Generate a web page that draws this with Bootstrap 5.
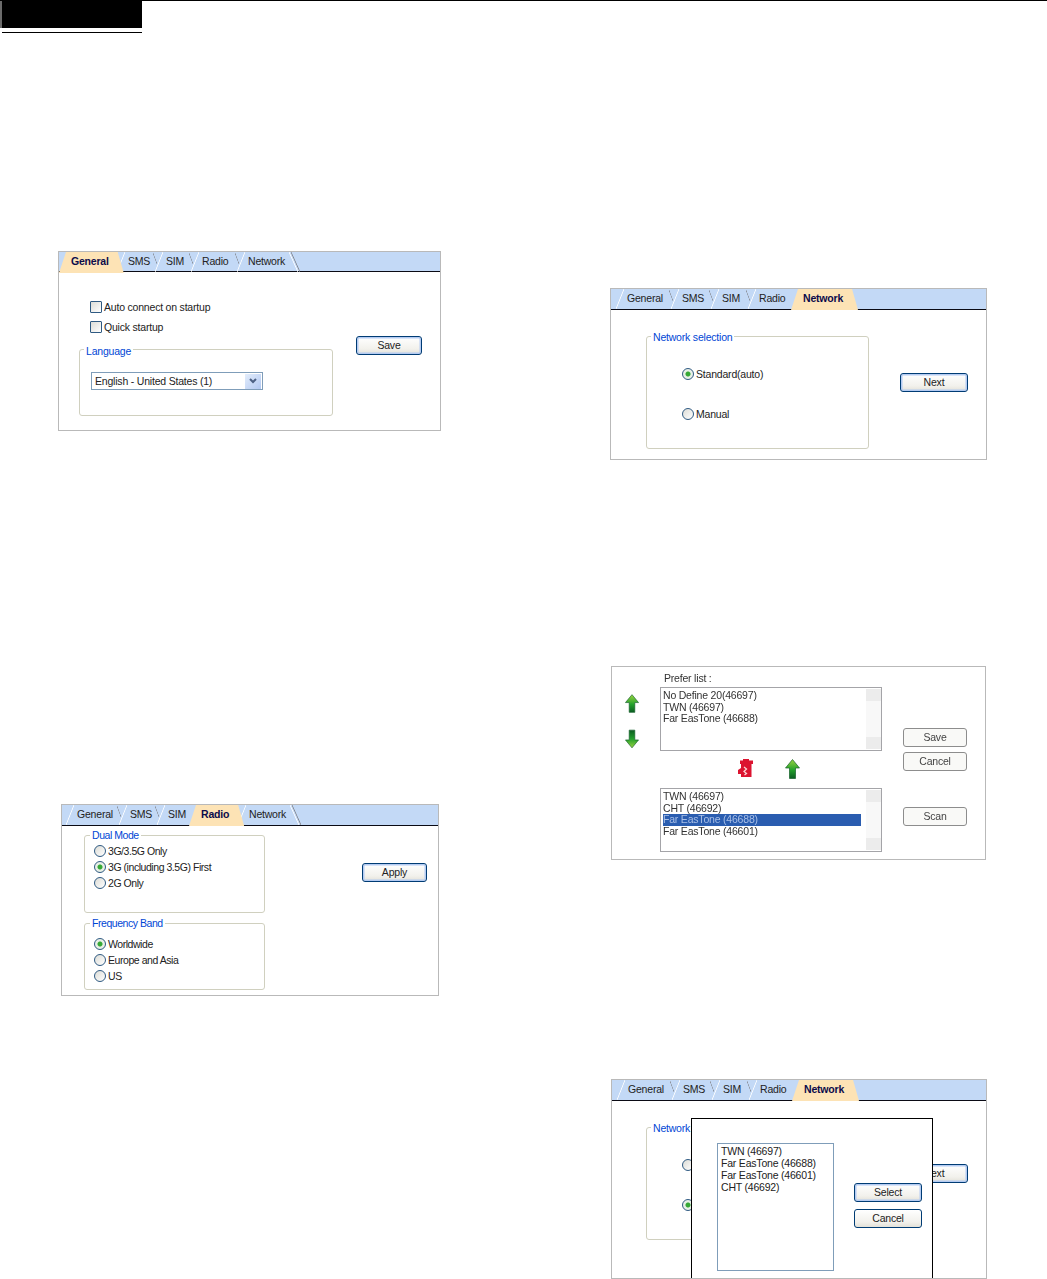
<!DOCTYPE html>
<html lang="en">
<head>
<meta charset="UTF-8">
<title>Settings manual page</title>
<link href="https://cdn.jsdelivr.net/npm/bootstrap@5.3.3/dist/css/bootstrap.min.css" rel="stylesheet">
<style>
html, body { height: 1279px; overflow: hidden; background: #fff; }
body { font-family: "Liberation Sans", Arial, sans-serif; font-size: 10.5px; line-height: 12px; color: #222; letter-spacing: -.2px; }

/* page header */
.doc-head { height: 33px; border-top: 1px solid #000; }
.head-mark { width: 142px; height: 27px; background: #000; border-left: 2px solid #6b6b6b; }
.head-rule { width: 140px; height: 1px; margin: 4px 0 0 2px; background: #000; }
.left-col { width: 610px; flex: none; }

/* screenshot panels */
.shot { position: relative; border: 1px solid #b9b9b9; background: #fff; overflow: hidden; }
#pn-general { width: 383px; height: 180px; margin: 218px 0 0 58px; }
#pn-radio { width: 378px; height: 192px; margin: 373px 0 0 61px; }
#pn-network { width: 377px; height: 172px; margin: 255px 0 0 0; }
#pn-prefer { width: 375px; height: 194px; margin: 206px 0 0 1px; }
#pn-select { width: 376px; height: 200px; margin: 219px 0 0 1px; }

/* tab strip */
.tab-strip { display: grid; height: 21px; background: #c3d9f6; border-bottom: 1px solid #0a0a14; line-height: 19px; }
#pn-general .tab-strip { height: 20px; padding-left: 12px; grid-template-columns: 57px 38px 36px 46px 60px 1fr; }
#pn-radio .tab-strip { padding-left: 15px; grid-template-columns: 53px 38px 33px 48px 60px 1fr; }
#pn-network .tab-strip, #pn-select .tab-strip { padding-left: 16px; grid-template-columns: 55px 40px 37px 44px 60px 1fr; }
.tab-cell { position: relative; font-size: 10.5px; white-space: nowrap; }
.tab-cell::before { content: ""; position: absolute; left: -11px; top: 0; width: 8px; height: 20px; background: linear-gradient(to bottom right, transparent calc(50% - .8px), #fff 50%, transparent calc(50% + .8px)); }
.tab-cell::after { content: ""; position: absolute; left: -13px; top: 1px; width: 4px; height: 11px; background: linear-gradient(to top right, transparent calc(50% - .6px), #8b8f98 50%, transparent calc(50% + .6px)); }
.tab-cell:first-child::after { display: none; }
.tab-tail { position: relative; }
.tab-tail::before { content: ""; position: absolute; left: -17px; top: 0; width: 9px; height: 20px; background: linear-gradient(to top right, transparent calc(50% - .8px), #85888f 50%, transparent calc(50% + .8px)); }
.tab-tail::after { content: ""; position: absolute; left: -19px; top: 0; width: 9px; height: 20px; background: linear-gradient(to top right, transparent calc(50% - .8px), #fff 50%, transparent calc(50% + .8px)); }
.tab-cell.is-on { z-index: 2; font-weight: 700; color: #0b0b4a; }
.tab-cell.is-on::before, .tab-cell.is-on::after { display: none; }
.tab-lbl { position: relative; display: inline-block; z-index: 0; }
.is-on .tab-lbl::before { content: ""; position: absolute; z-index: -1; left: -12px; right: -15px; top: 0; height: 21px; background: #fde3b5; clip-path: polygon(0 100%, 7px 0, calc(100% - 6px) 0, 100% 100%); }

/* form bits */
.grp-box { border: 1px solid #d0d0bf; border-radius: 3px; padding: 0; }
.grp-box legend { float: none; width: auto; margin: 0 0 0 4px; padding: 0 2px; font-size: 10.5px; line-height: 12px; color: #0046d5; }
.xp-row { display: flex; align-items: center; gap: 2px; height: 12px; line-height: 11px; white-space: nowrap; }
.xp-row .form-check-input { flex: none; width: 12px; height: 12px; margin: 0; border: 1px solid #2f5a82; background: linear-gradient(135deg, #dcdcd6, #fff); box-shadow: none; }
.xp-row .form-check-input[type=checkbox] { border-radius: 1px; }
.xp-row .form-check-input[type=radio]:checked { background: radial-gradient(circle, #35a835 0 2px, #e6f0e6 3px, #eeeee8 100%); border-color: #2f5a82; }
.xp-btn { display: block; padding: 0; height: 19px; font-size: 10.5px; line-height: 17px; letter-spacing: -.2px; color: #222; border: 1px solid #003c74; border-radius: 3px; background: linear-gradient(#fff, #f2f1ec 70%, #e3e1d8); }
.xp-default { box-shadow: inset 0 0 0 1.5px #b4cbf2; }
.xp-dim { border-color: #8d8d8d; background: #f9f9f7; color: #444; }
.xp-select { height: 18px; width: 172px; margin: 15px 0 0 11px; padding: 0 1px 0 3px; border: 1px solid #7f9db9; line-height: 16px; }
.drop-btn { width: 16px; height: 15px; margin-top: .5px; background: linear-gradient(135deg, #e3edfb, #b2c8f2); }
.xp-list { position: relative; height: 64px; border: 1px solid #a4a4a8; padding: 2px; line-height: 11.5px; }
.scroll-rail { position: absolute; top: 1px; right: 0; bottom: 1px; width: 15px; background: linear-gradient(#ececec 0 12px, #f8f8f8 12px calc(100% - 12px), #ececec calc(100% - 12px)); }
.pick-on { margin: 0 18px 0 0; background: #2a5db0; color: #a9bfe6; }

/* per panel spacing */
.general-body { padding: 29px 0 0 20px; }
.general-left { width: 254px; flex: none; }
.check-list { padding-left: 11px; }
.general-box { height: 75px; margin-top: 8px; }
.general-box legend { padding-top: 4px; }
.save-btn { width: 66px; margin: 35px 0 0 23px; }
.net-body { padding: 19px 0 0 35px; }
#pn-select .net-body { padding-left: 34px; }
.net-box { width: 223px; height: 120px; flex: none; }
.net-box legend { padding-top: 2px; }
.net-radios { padding: 25px 0 0 35px; }
.net-gap { height: 28px; }
.net-btn { width: 68px; margin: 44px 0 0 31px; }
#pn-radio .radio-body { letter-spacing: -.45px; }
.radio-body { padding: 3px 0 0 22px; }
.radio-left { width: 181px; flex: none; }
.mode-box { height: 84px; }
.band-box { height: 73px; margin-top: 4px; }
.radio-stack { padding: 4px 0 0 9px; }
.band-box .radio-stack { padding-top: 9px; }
#pn-radio .grp-box legend { margin-left: 5px; }
.apply-btn { width: 65px; margin: 34px 0 0 97px; }

.prefer-body { filter: blur(.6px); color: #333; }
.arrow-col { width: 48px; flex: none; padding: 27px 0 0 13px; }
.list-col { width: 222px; flex: none; padding-top: 5px; }
.prefer-title { height: 15px; padding-left: 4px; }
.mid-icons { height: 37px; padding: 8px 0 0 77px; gap: 31px; }
.btn-col { width: 64px; margin-left: 21px; padding-top: 61px; }
.btn-col .xp-btn { width: 64px; }
.cancel-btn { margin-top: 5px; }
.scan-btn { margin-top: 36px; }

.popup-sheet { position: absolute; left: 79px; top: 38px; bottom: 0; width: 242px; z-index: 5; padding: 24px 0 0 25px; background: #fff; border: 1px solid #000; border-bottom: 0; }
.popup-list { width: 117px; height: 128px; flex: none; padding: 1px 3px; border: 1px solid #7f9db9; line-height: 12px; }
.popup-btns { width: 68px; margin: 40px 0 0 20px; gap: 7px; }
</style>
</head>
<body>
<svg width="0" height="0" class="position-absolute">
  <defs>
    <linearGradient id="upGreen" x1="0" y1="0" x2="0" y2="1"><stop offset="0" stop-color="#9ad43f"/><stop offset=".55" stop-color="#23a12c"/><stop offset="1" stop-color="#0b5c22"/></linearGradient>
    <linearGradient id="downGreen" x1="0" y1="0" x2="0" y2="1"><stop offset="0" stop-color="#0b5c22"/><stop offset=".5" stop-color="#23a12c"/><stop offset="1" stop-color="#9ad43f"/></linearGradient>
    <symbol id="ic-up" viewBox="0 0 15 20"><path d="M7.5 .5 14.5 9H10.500V19.500H4.500V9H.5Z" fill="url(#upGreen)" stroke="#14602a" stroke-width=".7"/></symbol>
    <symbol id="ic-down" viewBox="0 0 15 20"><path d="M4.500 .5H10.500V11H14.500L7.500 19.500 .5 11H4.500Z" fill="url(#downGreen)" stroke="#14602a" stroke-width=".7"/></symbol>
    <symbol id="ic-bin" viewBox="0 0 17 18"><path d="M6 0H12V1.500H16V5H14.500V18H4V15H1V11L4 9V5H3V1.500H6Z" fill="#dc1430"/><path d="M7 8 9.500 10 7 12.500 9.500 14.500 7.500 16" fill="none" stroke="#fbd4d4" stroke-width="1.300"/></symbol>
  </defs>
</svg>

<header class="doc-head">
  <div class="head-mark"></div>
  <div class="head-rule"></div>
</header>

<main class="d-flex">
  <div class="left-col">
    <section class="shot" id="pn-general">
      <nav class="tab-strip">
        <span class="tab-cell is-on"><span class="tab-lbl">General</span></span>
        <span class="tab-cell">SMS</span><span class="tab-cell">SIM</span><span class="tab-cell">Radio</span><span class="tab-cell">Network</span><span class="tab-tail"></span>
      </nav>
      <div class="general-body d-flex">
        <div class="general-left">
          <div class="check-list d-flex flex-column gap-2">
            <label class="xp-row"><input class="form-check-input" type="checkbox">Auto connect on startup</label>
            <label class="xp-row"><input class="form-check-input" type="checkbox">Quick startup</label>
          </div>
          <fieldset class="grp-box general-box">
            <legend>Language</legend>
            <div class="xp-select d-flex justify-content-between">
              <span>English - United States (1)</span>
              <span class="drop-btn d-flex align-items-center justify-content-center"><svg width="8" height="6" viewBox="0 0 8 6"><path d="M1 1 4 4 7 1" fill="none" stroke="#4d6185" stroke-width="2"/></svg></span>
            </div>
          </fieldset>
        </div>
        <button type="button" class="btn xp-btn xp-default save-btn">Save</button>
      </div>
    </section>

    <section class="shot" id="pn-radio">
      <nav class="tab-strip">
        <span class="tab-cell">General</span><span class="tab-cell">SMS</span><span class="tab-cell">SIM</span>
        <span class="tab-cell is-on"><span class="tab-lbl">Radio</span></span>
        <span class="tab-cell">Network</span><span class="tab-tail"></span>
      </nav>
      <div class="radio-body d-flex">
        <div class="radio-left">
          <fieldset class="grp-box mode-box">
            <legend>Dual Mode</legend>
            <div class="radio-stack d-flex flex-column">
              <label class="xp-row mb-1"><input class="form-check-input" type="radio" name="mode">3G/3.5G Only</label>
              <label class="xp-row mb-1"><input class="form-check-input" type="radio" name="mode" checked>3G (including 3.5G) First</label>
              <label class="xp-row"><input class="form-check-input" type="radio" name="mode">2G Only</label>
            </div>
          </fieldset>
          <fieldset class="grp-box band-box">
            <legend>Frequency Band</legend>
            <div class="radio-stack d-flex flex-column">
              <label class="xp-row mb-1"><input class="form-check-input" type="radio" name="band" checked>Worldwide</label>
              <label class="xp-row mb-1"><input class="form-check-input" type="radio" name="band">Europe and Asia</label>
              <label class="xp-row"><input class="form-check-input" type="radio" name="band">US</label>
            </div>
          </fieldset>
        </div>
        <button type="button" class="btn xp-btn xp-default apply-btn">Apply</button>
      </div>
    </section>
  </div>

  <div>
    <section class="shot" id="pn-network">
      <nav class="tab-strip">
        <span class="tab-cell">General</span><span class="tab-cell">SMS</span><span class="tab-cell">SIM</span><span class="tab-cell">Radio</span>
        <span class="tab-cell is-on"><span class="tab-lbl">Network</span></span><span></span>
      </nav>
      <div class="net-body d-flex">
        <fieldset class="grp-box net-box">
          <legend>Network selection</legend>
          <div class="net-radios">
            <label class="xp-row"><input class="form-check-input" type="radio" name="net" checked>Standard(auto)</label>
            <div class="net-gap"></div>
            <label class="xp-row"><input class="form-check-input" type="radio" name="net">Manual</label>
          </div>
        </fieldset>
        <button type="button" class="btn xp-btn xp-default net-btn">Next</button>
      </div>
    </section>

    <section class="shot" id="pn-prefer">
      <div class="prefer-body d-flex">
        <div class="arrow-col d-flex flex-column gap-3">
          <svg width="14" height="19"><use href="#ic-up"/></svg>
          <svg width="14" height="20"><use href="#ic-down"/></svg>
        </div>
        <div class="list-col">
          <div class="prefer-title">Prefer list :</div>
          <div class="xp-list">
            <div>No Define 20(46697)</div>
            <div>TWN (46697)</div>
            <div>Far EasTone (46688)</div>
            <div class="scroll-rail"></div>
          </div>
          <div class="mid-icons d-flex">
            <svg width="17" height="18"><use href="#ic-bin"/></svg>
            <svg width="15" height="20"><use href="#ic-up"/></svg>
          </div>
          <div class="xp-list">
            <div>TWN (46697)</div>
            <div>CHT (46692)</div>
            <div class="pick-on">Far EasTone (46688)</div>
            <div>Far EasTone (46601)</div>
            <div class="scroll-rail"></div>
          </div>
        </div>
        <div class="btn-col">
          <button type="button" class="btn xp-btn xp-dim">Save</button>
          <button type="button" class="btn xp-btn xp-dim cancel-btn">Cancel</button>
          <button type="button" class="btn xp-btn xp-dim scan-btn">Scan</button>
        </div>
      </div>
    </section>

    <section class="shot" id="pn-select">
      <nav class="tab-strip">
        <span class="tab-cell">General</span><span class="tab-cell">SMS</span><span class="tab-cell">SIM</span><span class="tab-cell">Radio</span>
        <span class="tab-cell is-on"><span class="tab-lbl">Network</span></span><span></span>
      </nav>
      <div class="net-body d-flex">
        <fieldset class="grp-box net-box">
          <legend>Network selection</legend>
          <div class="net-radios">
            <label class="xp-row"><input class="form-check-input" type="radio" name="net2"></label>
            <div class="net-gap"></div>
            <label class="xp-row"><input class="form-check-input" type="radio" name="net2" checked></label>
          </div>
        </fieldset>
        <button type="button" class="btn xp-btn xp-default net-btn">Next</button>
      </div>
      <div class="popup-sheet d-flex">
        <div class="popup-list">
          <div>TWN (46697)</div>
          <div>Far EasTone (46688)</div>
          <div>Far EasTone (46601)</div>
          <div>CHT (46692)</div>
        </div>
        <div class="popup-btns d-flex flex-column">
          <button type="button" class="btn xp-btn xp-default">Select</button>
          <button type="button" class="btn xp-btn">Cancel</button>
        </div>
      </div>
    </section>
  </div>
</main>

<script src="https://cdn.jsdelivr.net/npm/bootstrap@5.3.3/dist/js/bootstrap.bundle.min.js"></script>
</body>
</html>
